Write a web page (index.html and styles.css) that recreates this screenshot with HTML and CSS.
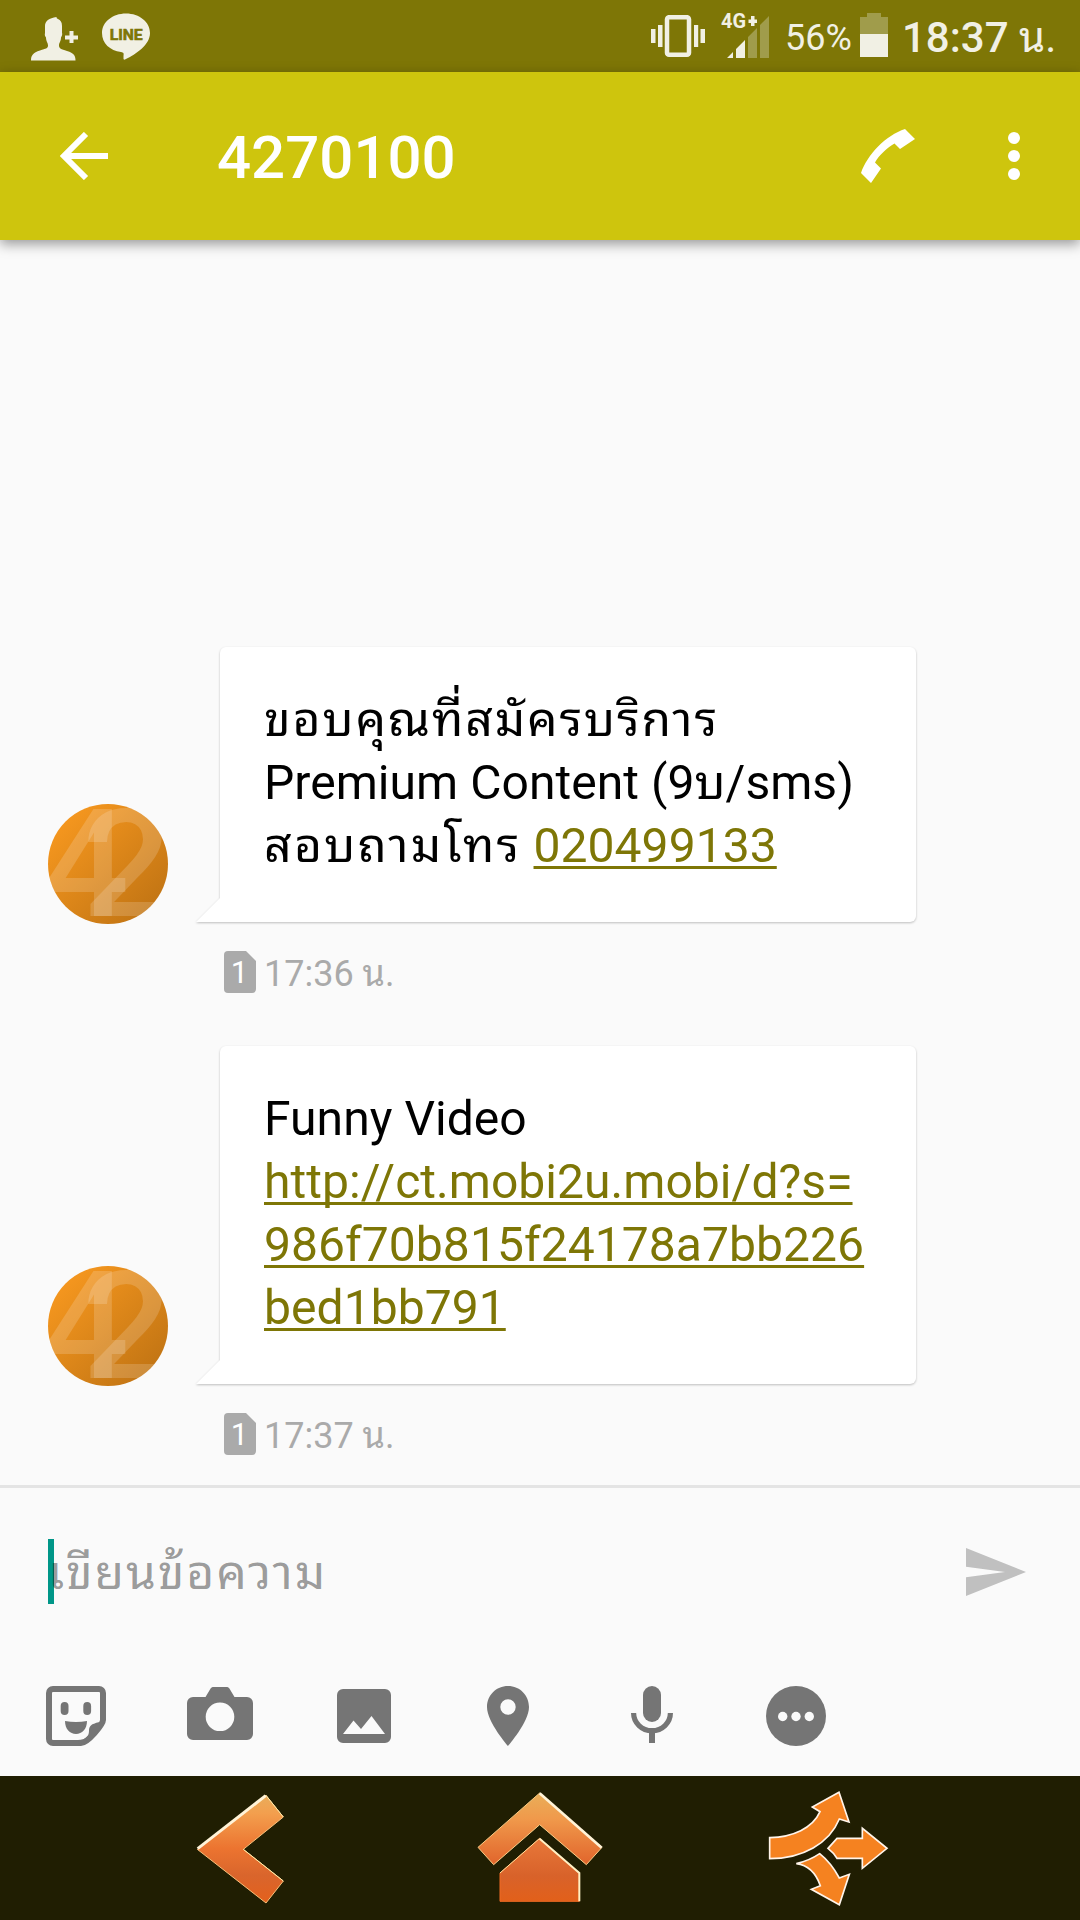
FILE: index.html
```html
<!DOCTYPE html>
<html lang="th">
<head>
<meta charset="utf-8">
<title>4270100</title>
<link rel="stylesheet" href="styles.css">
</head>
<body>
<div class="screen">
  <div class="status">
    <svg class="st-person" width="48" height="44" viewBox="0 0 48 44" fill="#f1f0e4"><path d="M0 43.5c0-5 2-8 9-10 6-2 8-2 8-5 0-3-2-4-2-8-1-1-1.500-3-1-4.500V9c0-5 4-8 11.500-9 0 1.500 1 1.500 1.500 2 2.500 1 4 3 4 7v6.500c.5 2 0 3.500-1 5 0 4-2 5-2 8 0 3 2 3.500 8 5.500 7 2 8.500 5 8.500 9.500z"/><path d="M38.500 14h4v4.500H47v4h-4.500V26h-4v-3.500H34v-4h4.500z"/></svg>
    <svg class="st-line" width="50" height="48" viewBox="0 0 50 48"><path fill="#f1f0e4" d="M25 .5C11.500.5 1 9 1 20c0 10.500 8 17.500 19 19 2.500.5 3 1 2.500 4v3c.5 1 1 .8 2 .3C35 41 49 32 49 20 49 9 38.500.5 25 .5z"/><text class="line-label" x="25.200" y="26.500" text-anchor="middle" textLength="33" lengthAdjust="spacingAndGlyphs">LINE</text></svg>
    <span class="grow"></span>
    <svg class="st-vibrate" width="54" height="42" viewBox="0 0 54 42" fill="#f1f0e4"><path d="M0 14h4.500v14H0zM7 10h4.500v22H7zM43 10h4.200v22H43zM49.500 14H54v14h-4.500z"/><rect x="16" y="2.200" width="22" height="37.500" rx="2" fill="none" stroke="#f1f0e4" stroke-width="4.500"/></svg>
    <svg class="st-signal" width="50" height="46" viewBox="0 0 50 46"><text class="net-label" x="0" y="15" textLength="25" lengthAdjust="spacingAndGlyphs">4G</text><path fill="#f1f0e4" d="M30 3h3.500v3.500H36V10h-2.500v3H30v-3h-2.500V6.500H30zM6 45l6-6v6zM15 45V36l9-9v18z"/><path fill="#a09c4b" d="M27 45V24l9-9v30zM39 45V12l9-9v42z"/></svg>
    <span class="percent">56%</span>
    <svg class="st-batt" width="28" height="44" viewBox="0 0 28 44"><path fill="#a09c4b" d="M7 0h14v4h7v18H0V4h7z"/><path fill="#f1f0e4" d="M0 21h28v23H0z"/></svg>
    <span class="clock"><b>18:37</b> น.</span>
  </div>

  <header class="bar">
    <svg class="back" width="48" height="48" viewBox="0 0 48 48" fill="none" stroke="#fff" stroke-width="6"><path d="M48 24H5M26 2 4 24l22 22"/></svg>
    <h1 class="title">4270100</h1>
    <svg class="call" width="54" height="54" viewBox="0 0 54 54" fill="#fff"><path d="M44 0 54 10 39 20 33.500 14.500C26 19 18 26 14 33.500L20 39.500 10 54 0 44C6 26 25 6 44 0z"/></svg>
    <svg class="more" width="12" height="48" viewBox="0 0 12 48" fill="#fff"><circle cx="6" cy="6" r="6"/><circle cx="6" cy="24" r="6"/><circle cx="6" cy="42" r="6"/></svg>
  </header>

  <main class="thread">
    <section class="message">
      <div class="row">
        <svg class="avatar" width="120" height="120" viewBox="0 0 120 120">
          <defs><linearGradient id="av" x1=".1" y1=".1" x2=".85" y2=".85"><stop offset="0" stop-color="#f7981f"/><stop offset="1" stop-color="#c47614"/></linearGradient><clipPath id="disc"><circle cx="60" cy="60" r="60"/></clipPath></defs>
          <circle cx="60" cy="60" r="60" fill="url(#av)"/>
          <g class="digits" clip-path="url(#disc)"><text x="-5" y="112" textLength="86" lengthAdjust="spacingAndGlyphs">4</text><text x="34" y="112" textLength="90" lengthAdjust="spacingAndGlyphs">2</text></g>
        </svg>
        <div class="balloon">
          <svg class="tail" width="24" height="24" viewBox="0 0 24 24"><path d="M24 0v24H0z" fill="#fff"/></svg>
          <div class="bubble"><span class="thai">ขอบคุณที่สมัครบริการ</span><br>Premium Content (9บ/sms)<br><span class="thai wide">สอบถามโทร</span> <a>020499133</a></div>
        </div>
      </div>
      <div class="meta">
        <svg width="32" height="42" viewBox="0 0 32 42"><path fill="#aaa" d="M4 0h18l10 10v28a4 4 0 0 1-4 4H4a4 4 0 0 1-4-4V4a4 4 0 0 1 4-4z"/><text class="sim" x="15.500" y="31.500" text-anchor="middle">1</text></svg>
        <time>17:36 น.</time>
      </div>
    </section>
    <section class="message">
      <div class="row">
        <svg class="avatar" width="120" height="120" viewBox="0 0 120 120">
          <circle cx="60" cy="60" r="60" fill="url(#av)"/>
          <g class="digits" clip-path="url(#disc)"><text x="-5" y="112" textLength="86" lengthAdjust="spacingAndGlyphs">4</text><text x="34" y="112" textLength="90" lengthAdjust="spacingAndGlyphs">2</text></g>
        </svg>
        <div class="balloon">
          <svg class="tail" width="24" height="24" viewBox="0 0 24 24"><path d="M24 0v24H0z" fill="#fff"/></svg>
          <div class="bubble">Funny Video<br><a>http://ct.mobi2u.mobi/d?s=<br>986f70b815f24178a7bb226<br>bed1bb791</a></div>
        </div>
      </div>
      <div class="meta">
        <svg width="32" height="42" viewBox="0 0 32 42"><path fill="#aaa" d="M4 0h18l10 10v28a4 4 0 0 1-4 4H4a4 4 0 0 1-4-4V4a4 4 0 0 1 4-4z"/><text class="sim" x="15.500" y="31.500" text-anchor="middle">1</text></svg>
        <time>17:37 น.</time>
      </div>
    </section>
  </main>

  <footer class="composer">
    <div class="input">
      <span class="placeholder thai">เขียนข้อความ</span>
      <svg class="send" width="60" height="48" viewBox="0 0 60 48" fill="#c0c0c0"><path d="M0 0 60 24 0 48V29.300L39 24 0 18.700z"/></svg>
    </div>
    <div class="tools">
      <svg width="60" height="60" viewBox="0 0 60 60"><path d="M7 3h46a4 4 0 0 1 4 4v27c0 4-15 23-22 23H7a4 4 0 0 1-4-4V7a4 4 0 0 1 4-4z" fill="none" stroke="#757575" stroke-width="6"/><path d="M57 34C52 38 43 36 43 45c0 6-4 9-11 9l1 4c10-1 25-18 26-24z" fill="#757575"/><rect x="14.700" y="16" width="7.800" height="13" rx="3.900" fill="#757575"/><rect x="37.300" y="16" width="7.800" height="13" rx="3.900" fill="#757575"/><path d="M19 35q11 2 22 0c0 8-5 13-11 13s-11-5-11-13z" fill="#757575"/></svg>
      <svg width="66" height="60" viewBox="0 0 66 60"><path fill="#757575" fill-rule="evenodd" d="M27 1h12c2 0 3 .5 4 2.500L47.500 11H60a6 6 0 0 1 6 6v31a6 6 0 0 1-6 6H6a6 6 0 0 1-6-6V17a6 6 0 0 1 6-6h12.500L23 3.500C24 1.500 25 1 27 1zm6 15.500a14.300 14.300 0 1 0 0 28.600 14.300 14.300 0 1 0 0-28.600z"/></svg>
      <svg width="54" height="54" viewBox="0 0 54 54"><path fill="#757575" fill-rule="evenodd" d="M6 0h42a6 6 0 0 1 6 6v42a6 6 0 0 1-6 6H6a6 6 0 0 1-6-6V6a6 6 0 0 1 6-6zm0 45h42L34.500 27 24 40l-7.500-8.500z"/></svg>
      <svg width="42" height="60" viewBox="0 0 42 60"><path fill="#757575" fill-rule="evenodd" d="M21 0C9 0 0 9.500 0 21c0 15 21 39 21 39s21-24 21-39C42 9.500 33 0 21 0zm0 13.300a7.700 7.700 0 1 1 0 15.400 7.700 7.700 0 0 1 0-15.400z"/></svg>
      <svg width="42" height="60" viewBox="0 0 42 60" fill="none" stroke="#757575"><rect x="12" y="0" width="18" height="36" rx="9" fill="#757575" stroke="none"/><path stroke-width="5.200" d="M2.600 27a18.400 17.700 0 0 0 36.800 0"/><path stroke-width="6" d="M21 45v12"/></svg>
      <svg width="60" height="60" viewBox="0 0 60 60"><circle cx="30" cy="30" r="30" fill="#757575"/><g fill="#fafafa"><circle cx="16.700" cy="30.500" r="4.700"/><circle cx="30" cy="30.500" r="4.700"/><circle cx="43.300" cy="30.500" r="4.700"/></g></svg>
    </div>
  </footer>

  <nav class="nav">
    <svg class="nav-back" width="96" height="144" viewBox="30 18 288 432">
      <defs><linearGradient id="og" gradientUnits="userSpaceOnUse" x1="0" y1="70" x2="0" y2="400"><stop offset="0" stop-color="#e8ae5c"/><stop offset=".18" stop-color="#f39f4e"/><stop offset=".5" stop-color="#ec7430"/><stop offset=".75" stop-color="#d9652c"/><stop offset="1" stop-color="#e4601c"/></linearGradient></defs>
      <path d="M52 238 258 76 310 141 190 238 310 333 258 399z" fill="url(#og)" stroke="#f8c07a" stroke-width="3"/><path d="M53 236 257 77" stroke="#fff3d8" stroke-width="9"/><path d="M257 75 310 141M190 238l120 95" stroke="#ffe9a8" stroke-width="3"/>
    </svg>
    <svg class="nav-home" width="130" height="144" viewBox="887 18 390 432">
      <defs><linearGradient id="hg" gradientUnits="userSpaceOnUse" x1="0" y1="70" x2="0" y2="290"><stop offset="0" stop-color="#eaae58"/><stop offset=".35" stop-color="#f0994b"/><stop offset="1" stop-color="#e0622a"/></linearGradient><linearGradient id="hh" x1="0" y1="0" x2="0" y2="1"><stop offset="0" stop-color="#e8783a"/><stop offset=".6" stop-color="#d8622a"/><stop offset="1" stop-color="#e2601a"/></linearGradient></defs>
      <path d="M1081 69 1268 232 1221 284 1081 164 943 284 896 232z" fill="url(#hg)" stroke="#f8cc85" stroke-width="3"/><path d="M1081 70 1267 233" stroke="#fff3d8" stroke-width="8"/>
      <path d="M1081 205 1200 309V394H962V309z" fill="url(#hh)" stroke="#ee6a24" stroke-width="3"/><path d="M962 309 1081 205" stroke="#ffe2a0" stroke-width="3"/><path d="M1081 206 1200 309V394" fill="none" stroke="#fff0c4" stroke-width="6"/>
    </svg>
    <svg class="nav-share" width="124" height="144" viewBox="500 18 372 432">
      <g fill="#f58220" stroke="#fff4ea" stroke-width="5" stroke-linejoin="miter"><path d="M511 203C580 201 640 175 662 125L639 111 719 67 749 156 720 147C690 220 610 266 511 266z"/><path d="M686 235 713 205H789V175L863 235 789 295V265H713Q705 250 686 235z"/><path d="M591 281Q630 272 661 251 695 278 720 324L750 313 720 404 636 358 663 347C650 310 625 285 591 281z"/></g>
    </svg>
  </nav>
</div>
</body>
</html>
```
FILE: styles.css
```css
* { box-sizing: border-box; }
body { margin: 0; }
svg { display: block; flex: none; }

.screen {
  width: 1080px;
  height: 1920px;
  display: flex;
  flex-direction: column;
  overflow: hidden;
  background: #fafafa;
  font-family: Roboto, "Noto Sans Thai Looped", "Noto Looped Thai", Loma, Garuda, Waree, Umpush, Laksaman, "Noto Sans Thai", "Noto Sans", sans-serif;
  color: #000;
}

.status {
  height: 72px;
  flex: none;
  display: flex;
  align-items: flex-start;
  background: #7e7606;
  color: #f1f0e4;
  padding-right: 27px;
}
.grow { flex: 1; }
.st-person { margin: 17px 0 0 31px; }
.st-line { margin: 13px 0 0 22px; }
.line-label { font: 700 15px Roboto, sans-serif; fill: #7e7606; stroke: #7e7606; stroke-width: .6px; }
.net-label { font: 700 20px Roboto, sans-serif; fill: #f1f0e4; }
.st-vibrate { margin: 15px 16px 0 0; }
.st-signal { margin: 13px 14px 0 0; }
.percent { width: 75px; font-size: 36px; line-height: 44px; margin-top: 16px; white-space: nowrap; }
.st-batt { margin: 13px 14px 0 0; }
.clock { width: 151px; font-size: 42px; line-height: 50px; margin-top: 13px; white-space: nowrap; }
.clock b { font-weight: 500; }

.bar {
  height: 168px;
  flex: none;
  display: flex;
  align-items: center;
  padding: 0 60px;
  background: #cec50d;
  box-shadow: 0 4px 12px rgba(0, 0, 0, .4);
}
.title {
  flex: 1;
  margin: 4px 0 0 109px;
  font-size: 60px;
  line-height: 72px;
  font-weight: 500;
  color: #fff;
}
.more { margin-left: 93px; }

.thread {
  flex: 1;
  display: flex;
  flex-direction: column;
  justify-content: flex-end;
  gap: 53px;
  padding: 0 164px 30px 48px;
}
.row {
  display: flex;
  align-items: flex-end;
  padding-bottom: 2px;
}
.avatar { margin: 0 28px -2px 0; }
.digits { font: 500 150px Roboto, sans-serif; fill: #fff; fill-opacity: .17; }
.balloon {
  flex: 1;
  display: flex;
  align-items: flex-end;
  filter: drop-shadow(0 1px 1px rgba(0, 0, 0, .24));
}
.bubble {
  flex: 1;
  padding: 41px 44px 45px;
  border-radius: 6px 6px 6px 0;
  background: #fff;
  font-size: 48px;
  line-height: 63px;
  letter-spacing: .05px;
  white-space: nowrap;
}
.bubble a {
  color: #7e7606;
  text-decoration: underline;
  text-decoration-thickness: 3px;
  text-underline-offset: 4px;
  text-decoration-skip-ink: none;
}
.thai { letter-spacing: 1.9px; }
.thai.wide { letter-spacing: 2.3px; }
.meta {
  display: flex;
  align-items: center;
  gap: 8px;
  height: 42px;
  margin: 27px 0 0 176px;
  font-size: 36px;
  line-height: 42px;
  color: #aaa;
}
.meta time { padding-top: 3px; }
.sim { font: 400 31px Roboto, sans-serif; fill: #fff; }

.composer {
  height: 291px;
  flex: none;
  border-top: 3px solid #e4e4e4;
}
.input {
  height: 168px;
  display: flex;
  align-items: center;
  justify-content: space-between;
  padding: 0 54px 0 48px;
}
.placeholder {
  height: 65px;
  margin-bottom: 2px;
  border-left: 6px solid #009688;
  font-size: 48px;
  line-height: 67px;
  color: rgba(0, 0, 0, .4);
  text-indent: -6px;
  white-space: nowrap;
}
.tools {
  height: 90px;
  margin: 15px 0 0 4px;
  display: grid;
  grid-template-columns: repeat(6, 144px);
  align-items: center;
  justify-items: center;
}

.nav {
  height: 144px;
  flex: none;
  display: flex;
  background: #201e02;
}
.nav-back { margin-left: 190px; }
.nav-home { margin-left: 189px; }
.nav-share { margin-left: 161px; }
```
